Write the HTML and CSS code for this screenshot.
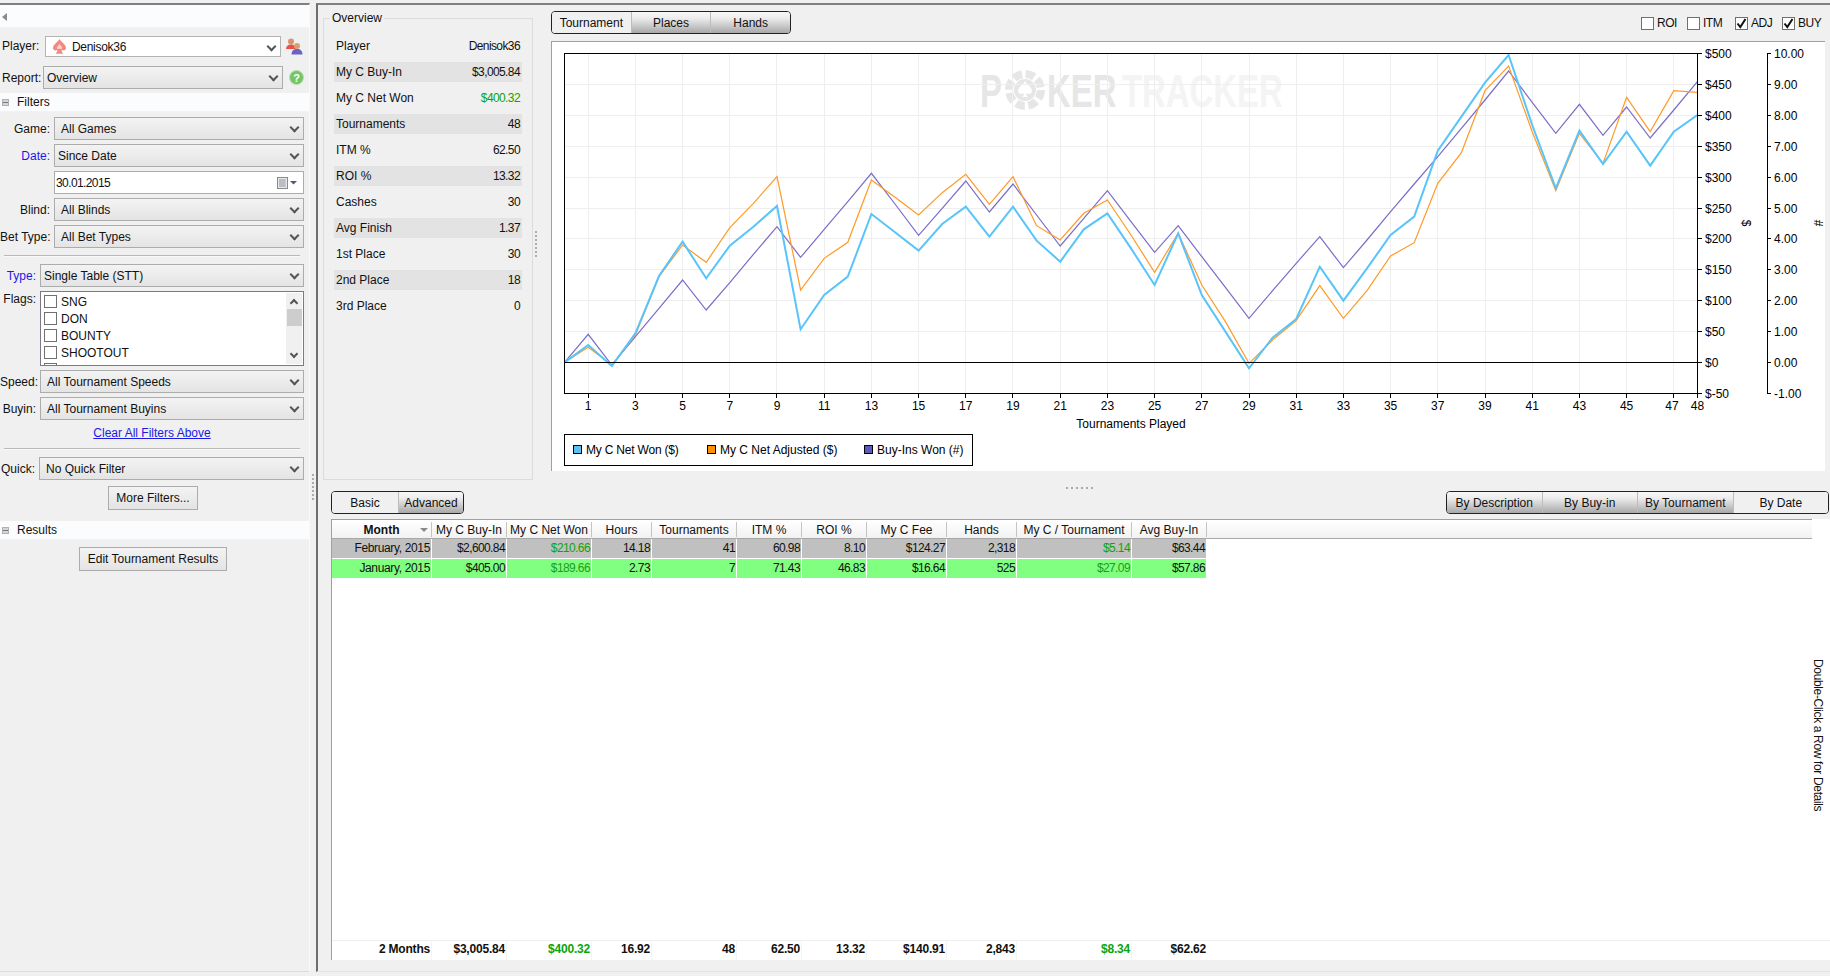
FILE: index.html
```html
<!DOCTYPE html>
<html lang="en">
<head>
<meta charset="utf-8">
<title>PokerTracker</title>
<link rel="stylesheet" href="styles.css">
</head>
<body>
<div class="app">
  <aside class="sidebar">
    <div class="band toolbar"><span class="back-arrow"></span></div>
    <div class="field player-field">
      <span class="lbl lbl-player">Player:</span>
      <div class="combo white player-combo">
        <svg class="spade" width="13" height="15" viewBox="0 0 13 15"><path d="M6.5 0C8 3 13 5.500 13 9c0 2.300-2.600 3.400-4.600 1.800.2 1.500.8 2.800 1.800 4H2.800c1-1.200 1.600-2.500 1.800-4C2.600 12.400 0 11.300 0 9 0 5.500 5 3 6.500 0z" fill="#f2897f"/><path d="M6.500 5C7.500 6.500 9 7.500 9 9c0 1-1.500 1.500-2.500.5C5.500 10.500 4 10 4 9c0-1.500 1.500-2.500 2.500-4z" fill="#fbd3ce"/></svg>
        <span class="name">Denisok36</span>
      </div>
      <svg class="users" width="17" height="17" viewBox="0 0 17 17"><circle cx="5" cy="3.500" r="3" fill="#d9946e"/><path d="M0 11c0-3 2-4.500 5-4.500S10 8 10 11z" fill="#e8504a"/><circle cx="11" cy="8" r="3" fill="#d9a06e"/><path d="M5.500 16.500c0-3.500 2-5.500 5.500-5.500s5.500 2 5.500 5.500z" fill="#6a63c4"/></svg>
    </div>
    <div class="field report-field">
      <span class="lbl lbl-report">Report:</span>
      <div class="combo tight report-combo"><span>Overview</span></div>
      <svg class="help" width="15" height="15" viewBox="0 0 15 15"><circle cx="7.500" cy="7.500" r="7" fill="#74c568" stroke="#b6dfae"/><text x="7.500" y="11.500" class="help-q">?</text></svg>
    </div>
    <div class="band section"><span class="minus"></span>Filters</div>
    <div class="stack wide-labels">
      <div class="field"><span class="lbl">Game:</span><div class="combo"><span>All Games</span></div></div>
      <div class="field"><span class="lbl link-lbl">Date:</span><div class="combo tight"><span>Since Date</span></div></div>
      <div class="field"><span class="lbl"></span>
        <div class="dateinput"><span class="num">30.01.2015</span>
          <svg width="20" height="12" viewBox="0 0 20 12"><rect x=".5" y=".5" width="10" height="11" fill="#e8e8e8" stroke="#8a8a8a"/><path d="M2 3h7M2 5h7M2 7h7M2 9h7M3 2v8M5 2v8M7 2v8" stroke="#a8b0b8"/><path d="M13 4h7l-3.500 3.500z" fill="#4a5a80"/></svg>
        </div>
      </div>
      <div class="field"><span class="lbl">Blind:</span><div class="combo"><span>All Blinds</span></div></div>
      <div class="field"><span class="lbl">Bet Type:</span><div class="combo"><span>All Bet Types</span></div></div>
    </div>
    <div class="rule first-rule"></div>
    <div class="stack narrow-labels type-stack">
      <div class="field"><span class="lbl link-lbl">Type:</span><div class="combo tight"><span>Single Table (STT)</span></div></div>
      <div class="field flags-field"><span class="lbl">Flags:</span>
        <div class="listbox">
          <div class="flag-items">
            <div class="flag"><span class="check"></span>SNG</div>
            <div class="flag"><span class="check"></span>DON</div>
            <div class="flag"><span class="check"></span>BOUNTY</div>
            <div class="flag"><span class="check"></span>SHOOTOUT</div>
            <div class="flag"><span class="check"></span></div>
          </div>
          <div class="scrollbar"><span class="chev up"></span><span class="thumb"></span><span class="chev down"></span></div>
        </div>
      </div>
      <div class="field"><span class="lbl">Speed:</span><div class="combo"><span>All Tournament Speeds</span></div></div>
      <div class="field"><span class="lbl">Buyin:</span><div class="combo"><span>All Tournament Buyins</span></div></div>
    </div>
    <a class="clear-link" href="#">Clear All Filters Above</a>
    <div class="rule second-rule"></div>
    <div class="field quick-field"><span class="lbl">Quick:</span><div class="combo"><span>No Quick Filter</span></div></div>
    <div class="btn-row more-row"><div class="btn more-btn">More Filters...</div></div>
    <div class="band section results"><span class="minus"></span>Results</div>
    <div class="btn-row edit-row"><div class="btn edit-btn">Edit Tournament Results</div></div>
  </aside>

  <div class="vsplit"><span class="dots-v"></span></div>

  <main class="main">
    <section class="upper">
      <fieldset class="overview">
        <legend>Overview</legend>
        <div class="ov-row"><span>Player</span><span class="num">Denisok36</span></div>
        <div class="ov-row alt"><span>My C Buy-In</span><span class="num">$3,005.84</span></div>
        <div class="ov-row"><span>My C Net Won</span><span class="num green">$400.32</span></div>
        <div class="ov-row alt"><span>Tournaments</span><span class="num">48</span></div>
        <div class="ov-row"><span>ITM %</span><span class="num">62.50</span></div>
        <div class="ov-row alt"><span>ROI %</span><span class="num">13.32</span></div>
        <div class="ov-row"><span>Cashes</span><span class="num">30</span></div>
        <div class="ov-row alt"><span>Avg Finish</span><span class="num">1.37</span></div>
        <div class="ov-row"><span>1st Place</span><span class="num">30</span></div>
        <div class="ov-row alt"><span>2nd Place</span><span class="num">18</span></div>
        <div class="ov-row"><span>3rd Place</span><span class="num">0</span></div>
      </fieldset>
      <div class="ov-split"><span class="dots-v"></span></div>
      <div class="chart-col">
        <div class="chart-bar">
          <div class="tabs chart-tabs">
            <div class="tab on">Tournament</div><div class="tab">Places</div><div class="tab">Hands</div>
          </div>
          <div class="toggles">
            <div class="toggle"><span class="box"></span>ROI</div>
            <div class="toggle"><span class="box"></span>ITM</div>
            <div class="toggle"><span class="box"><svg width="11" height="11" viewBox="0 0 11 11"><path d="M1.500 5.500l2.800 3.500L9.500 1" class="tick"/></svg></span>ADJ</div>
            <div class="toggle"><span class="box"><svg width="11" height="11" viewBox="0 0 11 11"><path d="M1.500 5.500l2.800 3.500L9.500 1" class="tick"/></svg></span>BUY</div>
          </div>
        </div>
        <svg class="chart" width="1274" height="430" viewBox="552 42 1273 429">
          <g class="watermark">
            <text transform="translate(980,107) scale(.7,1)" class="wm wm-dark">P</text>
            <circle cx="1025" cy="90" r="16" class="chip-ring"/>
            <circle cx="1025" cy="90" r="11" class="chip-core"/>
            <path d="M1025 81c2 4 7 6 7 10 0 3-4 4-6 2 0 2 1 3 2 4h-6c1-1 2-2 2-4-2 2-6 1-6-2 0-4 5-6 7-10z" class="chip-spade"/>
            <text transform="translate(1047,107) scale(.7,1)" class="wm wm-dark">KER</text>
            <text transform="translate(1122,107) scale(.7,1)" class="wm wm-light">TRACKER</text>
          </g>
          <path class="grid" d="M564 84.500H1698M564 115.500H1698M564 146.500H1698M564 177.500H1698M564 208.500H1698M564 238.500H1698M564 269.500H1698M564 300.500H1698M564 331.500H1698"/>
          <g transform="translate(564.600,0) scale(23.600,1)">
            <path class="grid" d="M1 54V393M3 54V393M5 54V393M7 54V393M9 54V393M11 54V393M13 54V393M15 54V393M17 54V393M19 54V393M21 54V393M23 54V393M25 54V393M27 54V393M29 54V393M31 54V393M33 54V393M35 54V393M37 54V393M39 54V393M41 54V393M43 54V393M45 54V393M47 54V393"/>
            <path class="axis" d="M1 393V398M3 393V398M5 393V398M7 393V398M9 393V398M11 393V398M13 393V398M15 393V398M17 393V398M19 393V398M21 393V398M23 393V398M25 393V398M27 393V398M29 393V398M31 393V398M33 393V398M35 393V398M37 393V398M39 393V398M41 393V398M43 393V398M45 393V398M47 393V398M48 393V398"/>
          </g>
          <g transform="translate(564.600,0) scale(23.600,0.33333)">
            <polyline class="line purple" points="0,1087 1,1003 2,1095 3,1010 4,925 5,840 6,930 7,848 8,763 9,680 10,772 11,688 12,605 13,520 14,612 15,706 16,625 17,543 18,636 19,552 20,645 21,738 22,655 23,572 24,665 25,757 26,677 27,770 28,862 29,955 30,872 31,790 32,710 33,803 34,720 35,635 36,552 37,470 38,385 39,300 40,213 41,307 42,400 43,313 44,406 45,321 46,414 47,330 48,245"/>
            <polyline class="line orange" points="0,1087 1,1042 2,1095 3,1005 4,830 5,735 6,787 7,683 8,610 9,530 10,870 11,775 12,727 13,540 14,592 15,645 16,578 17,523 18,613 19,530 20,677 21,720 22,640 23,600 24,705 25,817 26,700 27,855 28,965 29,1090 30,1020 31,962 32,857 33,955 34,872 35,768 36,728 37,550 38,458 39,272 40,198 41,395 42,572 43,400 44,490 45,292 46,395 47,272 48,277"/>
            <polyline class="line blue" points="0,1087 1,1035 2,1098 3,1000 4,828 5,725 6,835 7,737 8,680 9,618 10,988 11,885 12,830 13,642 14,697 15,752 16,672 17,620 18,710 19,620 20,722 21,785 22,688 23,640 24,745 25,855 26,700 27,885 28,995 29,1105 30,1013 31,957 32,800 33,902 34,805 35,705 36,650 37,452 38,350 39,248 40,165 41,375 42,565 43,392 44,492 45,395 46,497 47,395 48,345"/>
          </g>
          <rect class="plot" x="564.500" y="53.500" width="1133" height="340"/>
          <path class="axis" d="M564 362.500H1698"/>
          <path class="axis" d="M1698 53.500h4M1698 84.500h4M1698 115.500h4M1698 146.500h4M1698 177.500h4M1698 208.500h4M1698 238.500h4M1698 269.500h4M1698 300.500h4M1698 331.500h4M1698 362.500h4M1698 393.500h4"/>
          <path class="axis" d="M1771 53.500H1767.500V393.500H1771M1767.500 84.500h3M1767.500 115.500h3M1767.500 146.500h3M1767.500 177.500h3M1767.500 208.500h3M1767.500 238.500h3M1767.500 269.500h3M1767.500 300.500h3M1767.500 331.500h3M1767.500 362.500h3"/>
          <g class="ax">
            <text x="1705" y="58">$500</text><text x="1705" y="89">$450</text><text x="1705" y="120">$400</text><text x="1705" y="151">$350</text><text x="1705" y="182">$300</text><text x="1705" y="213">$250</text><text x="1705" y="243">$200</text><text x="1705" y="274">$150</text><text x="1705" y="305">$100</text><text x="1705" y="336">$50</text><text x="1705" y="367">$0</text><text x="1705" y="398">$-50</text>
            <text x="1774" y="58">10.00</text><text x="1774" y="89">9.00</text><text x="1774" y="120">8.00</text><text x="1774" y="151">7.00</text><text x="1774" y="182">6.00</text><text x="1774" y="213">5.00</text><text x="1774" y="243">4.00</text><text x="1774" y="274">3.00</text><text x="1774" y="305">2.00</text><text x="1774" y="336">1.00</text><text x="1774" y="367">0.00</text><text x="1774" y="398">-1.00</text>
            <text transform="translate(1742,223) rotate(90)" class="mid">$</text>
            <text transform="translate(1814,223) rotate(90)" class="mid">#</text>
          </g>
          <g class="ax mid">
            <text x="588.200" y="410">1</text><text x="635.400" y="410">3</text><text x="682.600" y="410">5</text><text x="729.800" y="410">7</text><text x="777" y="410">9</text><text x="824.200" y="410">11</text><text x="871.400" y="410">13</text><text x="918.600" y="410">15</text><text x="965.800" y="410">17</text><text x="1013" y="410">19</text><text x="1060.200" y="410">21</text><text x="1107.400" y="410">23</text><text x="1154.600" y="410">25</text><text x="1201.800" y="410">27</text><text x="1249" y="410">29</text><text x="1296.200" y="410">31</text><text x="1343.400" y="410">33</text><text x="1390.600" y="410">35</text><text x="1437.800" y="410">37</text><text x="1485" y="410">39</text><text x="1532.200" y="410">41</text><text x="1579.400" y="410">43</text><text x="1626.600" y="410">45</text><text x="1672" y="410">47</text><text x="1697.500" y="410">48</text>
            <text x="1131" y="428">Tournaments Played</text>
          </g>
          <rect class="plot" x="564.500" y="434.500" width="408" height="31"/>
          <rect class="swatch" x="573.500" y="445.500" width="8" height="8" fill="#5ac1f5"/>
          <rect class="swatch" x="707.500" y="445.500" width="8" height="8" fill="#ff9000"/>
          <rect class="swatch" x="864.500" y="445.500" width="8" height="8" fill="#5a5ac0"/>
          <g class="ax">
            <text x="586" y="454" class="snug">My C Net Won ($)</text>
            <text x="720" y="454">My C Net Adjusted ($)</text>
            <text x="877" y="454">Buy-Ins Won (#)</text>
          </g>
        </svg>
      </div>
    </section>

    <div class="hsplit"><span class="dots-h"></span></div>

    <div class="lower-bar">
      <div class="tabs basic-tabs"><div class="tab on">Basic</div><div class="tab">Advanced</div></div>
      <div class="tabs by-tabs"><div class="tab">By Description</div><div class="tab">By Buy-in</div><div class="tab">By Tournament</div><div class="tab on">By Date</div></div>
    </div>

    <section class="datagrid">
      <div class="row head">
        <div class="month-head">Month<span class="sort"></span></div><div>My C Buy-In</div><div>My C Net Won</div><div>Hours</div><div>Tournaments</div><div>ITM %</div><div>ROI %</div><div>My C Fee</div><div>Hands</div><div>My C / Tournament</div><div>Avg Buy-In</div>
      </div>
      <div class="grid-body">
        <div class="rows">
          <div class="row data grey"><div>February, 2015</div><div>$2,600.84</div><div class="green">$210.66</div><div>14.18</div><div>41</div><div>60.98</div><div>8.10</div><div>$124.27</div><div>2,318</div><div class="green">$5.14</div><div>$63.44</div></div>
          <div class="row data lime"><div>January, 2015</div><div>$405.00</div><div class="green">$189.66</div><div>2.73</div><div>7</div><div>71.43</div><div>46.83</div><div>$16.64</div><div>525</div><div class="green">$27.09</div><div>$57.86</div></div>
        </div>
        <div class="note">Double-Click a Row for Details</div>
      </div>
      <div class="row foot"><div>2 Months</div><div>$3,005.84</div><div class="green">$400.32</div><div>16.92</div><div>48</div><div>62.50</div><div>13.32</div><div>$140.91</div><div>2,843</div><div class="green">$8.34</div><div>$62.62</div></div>
    </section>
  </main>
</div>
</body>
</html>
```

FILE: styles.css
```css
* { box-sizing: border-box; }
html, body { margin: 0; height: 976px; overflow: hidden; }
body { background: #f0f0f0; font: 12px/14px "Liberation Sans", Arial, sans-serif; color: #111; }
.app { display: flex; height: 972px; padding-top: 3px; }

/* sidebar */
.sidebar { width: 310px; flex: none; border-top: 2px solid #7f7f7f; border-right: 1px solid #fafafa; border-bottom: 1px solid #dcdcdc; }
.band { background: #fbfcfe; box-shadow: inset 0 -1px 0 #eef3f9; }
.toolbar { height: 23px; display: flex; align-items: center; padding-left: 2px; }
.back-arrow { width: 0; height: 0; border: 4px solid transparent; border-right: 5px solid #8a8a8a; border-left: 0; }
.section { height: 19px; display: flex; align-items: center; margin-top: 4px; padding-bottom: 1px; }
.minus { width: 7px; height: 7px; margin: 1px 8px 0 2px; border: 1px solid #b0b0b0; background: linear-gradient(#d6d6d6 0 2px, #777 2px 3px, #d6d6d6 3px); }
.results { margin-top: 11px; }
.field { display: flex; align-items: center; margin-right: 5px; }
.lbl { flex: none; text-align: right; padding-right: 4px; white-space: nowrap; }
.combo { flex: 1; height: 23px; display: flex; align-items: center; padding-left: 6px; border: 1px solid #acacac; background: linear-gradient(#f3f3f3, #e4e4e4); position: relative; }
.combo.tight { padding-left: 3px; }
.combo::after { content: ""; position: absolute; right: 5px; top: 6px; width: 5px; height: 5px; border-right: 2px solid #555; border-bottom: 2px solid #555; transform: rotate(45deg); }
.combo.white { background: #fff; }
.player-field { margin-top: 8px; margin-right: 0; }
.lbl-player { width: 45px; text-align: left; padding: 0 0 2px 2px; }
.player-combo { flex: none; width: 236px; height: 21px; padding-left: 7px; border-color: #b4b4b4; }
.spade { margin-right: 6px; }
.name { letter-spacing: -.3px; }
.users { margin-left: 5px; }
.report-field { margin-top: 9px; margin-right: 0; }
.lbl-report { width: 43px; text-align: left; padding: 0 0 0 2px; }
.report-combo { flex: none; width: 240px; }
.help { margin-left: 6px; }
.help-q { font: bold 11px "Liberation Sans", sans-serif; fill: #fff; text-anchor: middle; }
.stack { display: flex; flex-direction: column; gap: 4px; }
.wide-labels { margin-top: 5px; }
.wide-labels .lbl { width: 54px; }
.narrow-labels .lbl { width: 40px; }
.link-lbl { color: #1a1ae6; }
.dateinput { flex: 1; height: 23px; display: flex; align-items: center; justify-content: space-between; padding: 0 6px 0 1px; border: 1px solid #acacac; background: #fff; }
.num { letter-spacing: -.6px; }
.rule { height: 1px; background: #b9b9b9; margin: 0 9px 0 4px; box-shadow: 0 1px 0 #fafafa; }
.first-rule { margin-top: 7px; }
.type-stack { margin-top: 8px; }
.flags-field { align-items: flex-start; }
.flags-field .lbl { padding-top: 1px; }
.listbox { flex: 1; height: 75px; display: flex; justify-content: space-between; border: 1px solid #7a7a85; background: #fff; overflow: hidden; }
.flag-items { padding: 1px 0 0 3px; }
.flag { display: flex; align-items: center; height: 17px; }
.check { width: 13px; height: 13px; flex: none; border: 1px solid #707070; background: #fff; margin-right: 4px; }
.scrollbar { width: 16px; margin: 1px 1px 1px 0; background: #f0f0f0; display: flex; flex-direction: column; align-items: center; }
.chev { width: 6px; height: 6px; border-right: 2px solid #555; border-bottom: 2px solid #555; }
.chev.up { transform: rotate(-135deg); margin-top: 7px; }
.chev.down { transform: rotate(45deg); margin-top: auto; margin-bottom: 7px; }
.thumb { width: 15px; height: 17px; margin-top: 3px; background: #cdcdcd; }
.clear-link { display: block; margin: 6px 5px 0 0; text-align: center; color: #1a1ae6; text-decoration: underline; }
.second-rule { margin-top: 8px; }
.quick-field { margin-top: 8px; }
.quick-field .lbl { width: 39px; }
.btn-row { display: flex; }
.more-row { margin-top: 6px; padding-left: 108px; }
.edit-row { margin-top: 7px; padding-left: 79px; }
.btn { height: 24px; display: flex; align-items: center; justify-content: center; border: 1px solid #acacac; background: linear-gradient(#f3f3f3, #e4e4e4); }
.more-btn { width: 90px; }
.edit-btn { width: 148px; }

.vsplit { width: 6px; flex: none; display: flex; flex-direction: column; align-items: center; padding-top: 471px; }
.dots-v { display: block; width: 2px; height: 27px; background: repeating-linear-gradient(#ababab 0 2px, transparent 2px 4px); }

/* main */
.main { flex: 1; min-width: 0; border-top: 2px solid #7f7f7f; border-left: 2px solid #6e6e6e; border-bottom: 1px solid #e4e4e4; display: flex; flex-direction: column; }
.upper { display: flex; height: 477px; flex: none; }
.overview { width: 210px; height: 469px; margin: 6px 0 0 5px; padding: 11px 10px 0; border: 1px solid #dcdcdc; min-width: 0; }
.overview legend { padding: 0 2px; margin-left: -4px; }
.ov-row { height: 20px; margin-bottom: 6px; padding: 0 2px; display: flex; align-items: center; justify-content: space-between; }
.ov-row.alt { background: #e3e3e3; }
.green { color: #0aa50a; }
.ov-split { width: 18px; flex: none; padding: 226px 0 0 2px; }
.chart-col { flex: 1; min-width: 0; display: flex; flex-direction: column; padding-top: 6px; }
.chart-bar { height: 30px; display: flex; justify-content: space-between; padding-right: 10px; flex: none; }
.tabs { display: flex; height: 23px; border: 1px solid #222; border-radius: 4px; overflow: hidden; }
.tab { display: flex; align-items: center; justify-content: center; border-left: 1px solid #bcbcbc; background: linear-gradient(#f8f8f8, #ececec 30%, #a8a8a8); }
.tab:first-child { border-left: 0; }
.tab.on { background: #f0f0f0; }
.chart-tabs { width: 240px; }
.chart-tabs .tab { flex: 1; }
.toggles { display: flex; padding-top: 5px; letter-spacing: -.5px; }
.toggle { display: flex; align-items: center; gap: 3px; height: 14px; width: 47px; }
.toggle:nth-child(1) { width: 46px; }
.toggle:nth-child(2) { width: 48px; }
.toggle:nth-child(4) { width: 38px; }
.box { width: 13px; height: 13px; border: 1px solid #707070; background: #fff; display: flex; }
.tick { fill: none; stroke: #111; stroke-width: 2; }
.chart { display: block; flex: none; background: #fff; border-top: 1px solid #a0a0a0; border-left: 1px solid #a0a0a0; }
.grid { fill: none; stroke: #eeeeee; vector-effect: non-scaling-stroke; shape-rendering: crispEdges; }
.axis { fill: none; stroke: #000; vector-effect: non-scaling-stroke; shape-rendering: crispEdges; }
.plot { fill: none; stroke: #000; shape-rendering: crispEdges; }
.swatch { stroke: #000; shape-rendering: crispEdges; }
.line { fill: none; vector-effect: non-scaling-stroke; stroke-linejoin: miter; }
.blue { stroke: #58c4fa; stroke-width: 2; }
.orange { stroke: #ff9a26; stroke-width: 1.200; }
.purple { stroke: #7a6cc8; stroke-width: 1.200; }
.ax text { font: 12px "Liberation Sans", sans-serif; fill: #000; }
.ax text.snug { letter-spacing: -.2px; }
.ax.mid text, .ax text.mid { text-anchor: middle; }
.wm { font: bold 47px "Liberation Sans", sans-serif; }
.wm-dark { fill: #e6e6e6; }
.wm-light { fill: #f4f4f4; }
.chip-ring { fill: none; stroke: #e6e6e6; stroke-width: 8; stroke-dasharray: 9 3.600; }
.chip-core { fill: #e6e6e6; }
.chip-spade { fill: #fff; }

.hsplit { height: 9px; flex: none; padding: 5px 0 0 748px; }
.dots-h { display: block; width: 28px; height: 2px; background: repeating-linear-gradient(90deg, #ababab 0 2px, transparent 2px 5px); }
.lower-bar { display: flex; justify-content: space-between; padding: 0 1px 0 13px; flex: none; }
.basic-tabs { width: 133px; }
.basic-tabs .tab:first-child { width: 66px; }
.basic-tabs .tab:last-child { flex: 1; }
.by-tabs { width: 383px; }
.by-tabs .tab { flex: 1; }

.datagrid { margin: 5px 0 0 13px; height: 441px; flex: none; background: #fff; border-left: 1px solid #a0a0a0; display: flex; flex-direction: column; }
.row { display: grid; grid-template-columns: 100px 75px 85px 60px 85px 65px 65px 80px 70px 115px 75px; width: 875px; flex: none; }
.head { width: 1480px; height: 20px; background: linear-gradient(#fff, #f2f2f2); border-top: 1px solid #a0a0a0; border-bottom: 1px solid #a8a8a8; }
.head > div { display: flex; align-items: center; justify-content: center; margin: 2px 0 1px; border-right: 1px solid #c4c4c4; white-space: nowrap; }
.month-head { font-weight: bold; position: relative; }
.sort { position: absolute; right: 3px; top: 6px; border: 4px solid transparent; border-top: 4px solid #8a8a8a; border-bottom: 0; }
.grid-body { flex: 1; display: flex; min-height: 0; }
.rows { flex: 1; }
.data { height: 19px; margin-bottom: 1px; letter-spacing: -.6px; }
.data > div, .foot > div { text-align: right; padding-right: 1px; line-height: 19px; border-right: 1px solid #fff; white-space: nowrap; }
.data > div:first-child { letter-spacing: -.35px; }
.grey { background: #c0c0c0; }
.lime { background: #80ff80; }
.lime .green { color: #18a018; }
.note { writing-mode: vertical-rl; align-self: center; margin: 0 5px 8px 0; letter-spacing: -.35px; }
.foot { height: 20px; font-weight: bold; width: 100%; border-top: 1px solid #eeeeee; }
.foot > div { line-height: 17px; border-right-color: #f4f4f4; letter-spacing: -.2px; }
.foot > div:last-child { border-right: 0; }
```
